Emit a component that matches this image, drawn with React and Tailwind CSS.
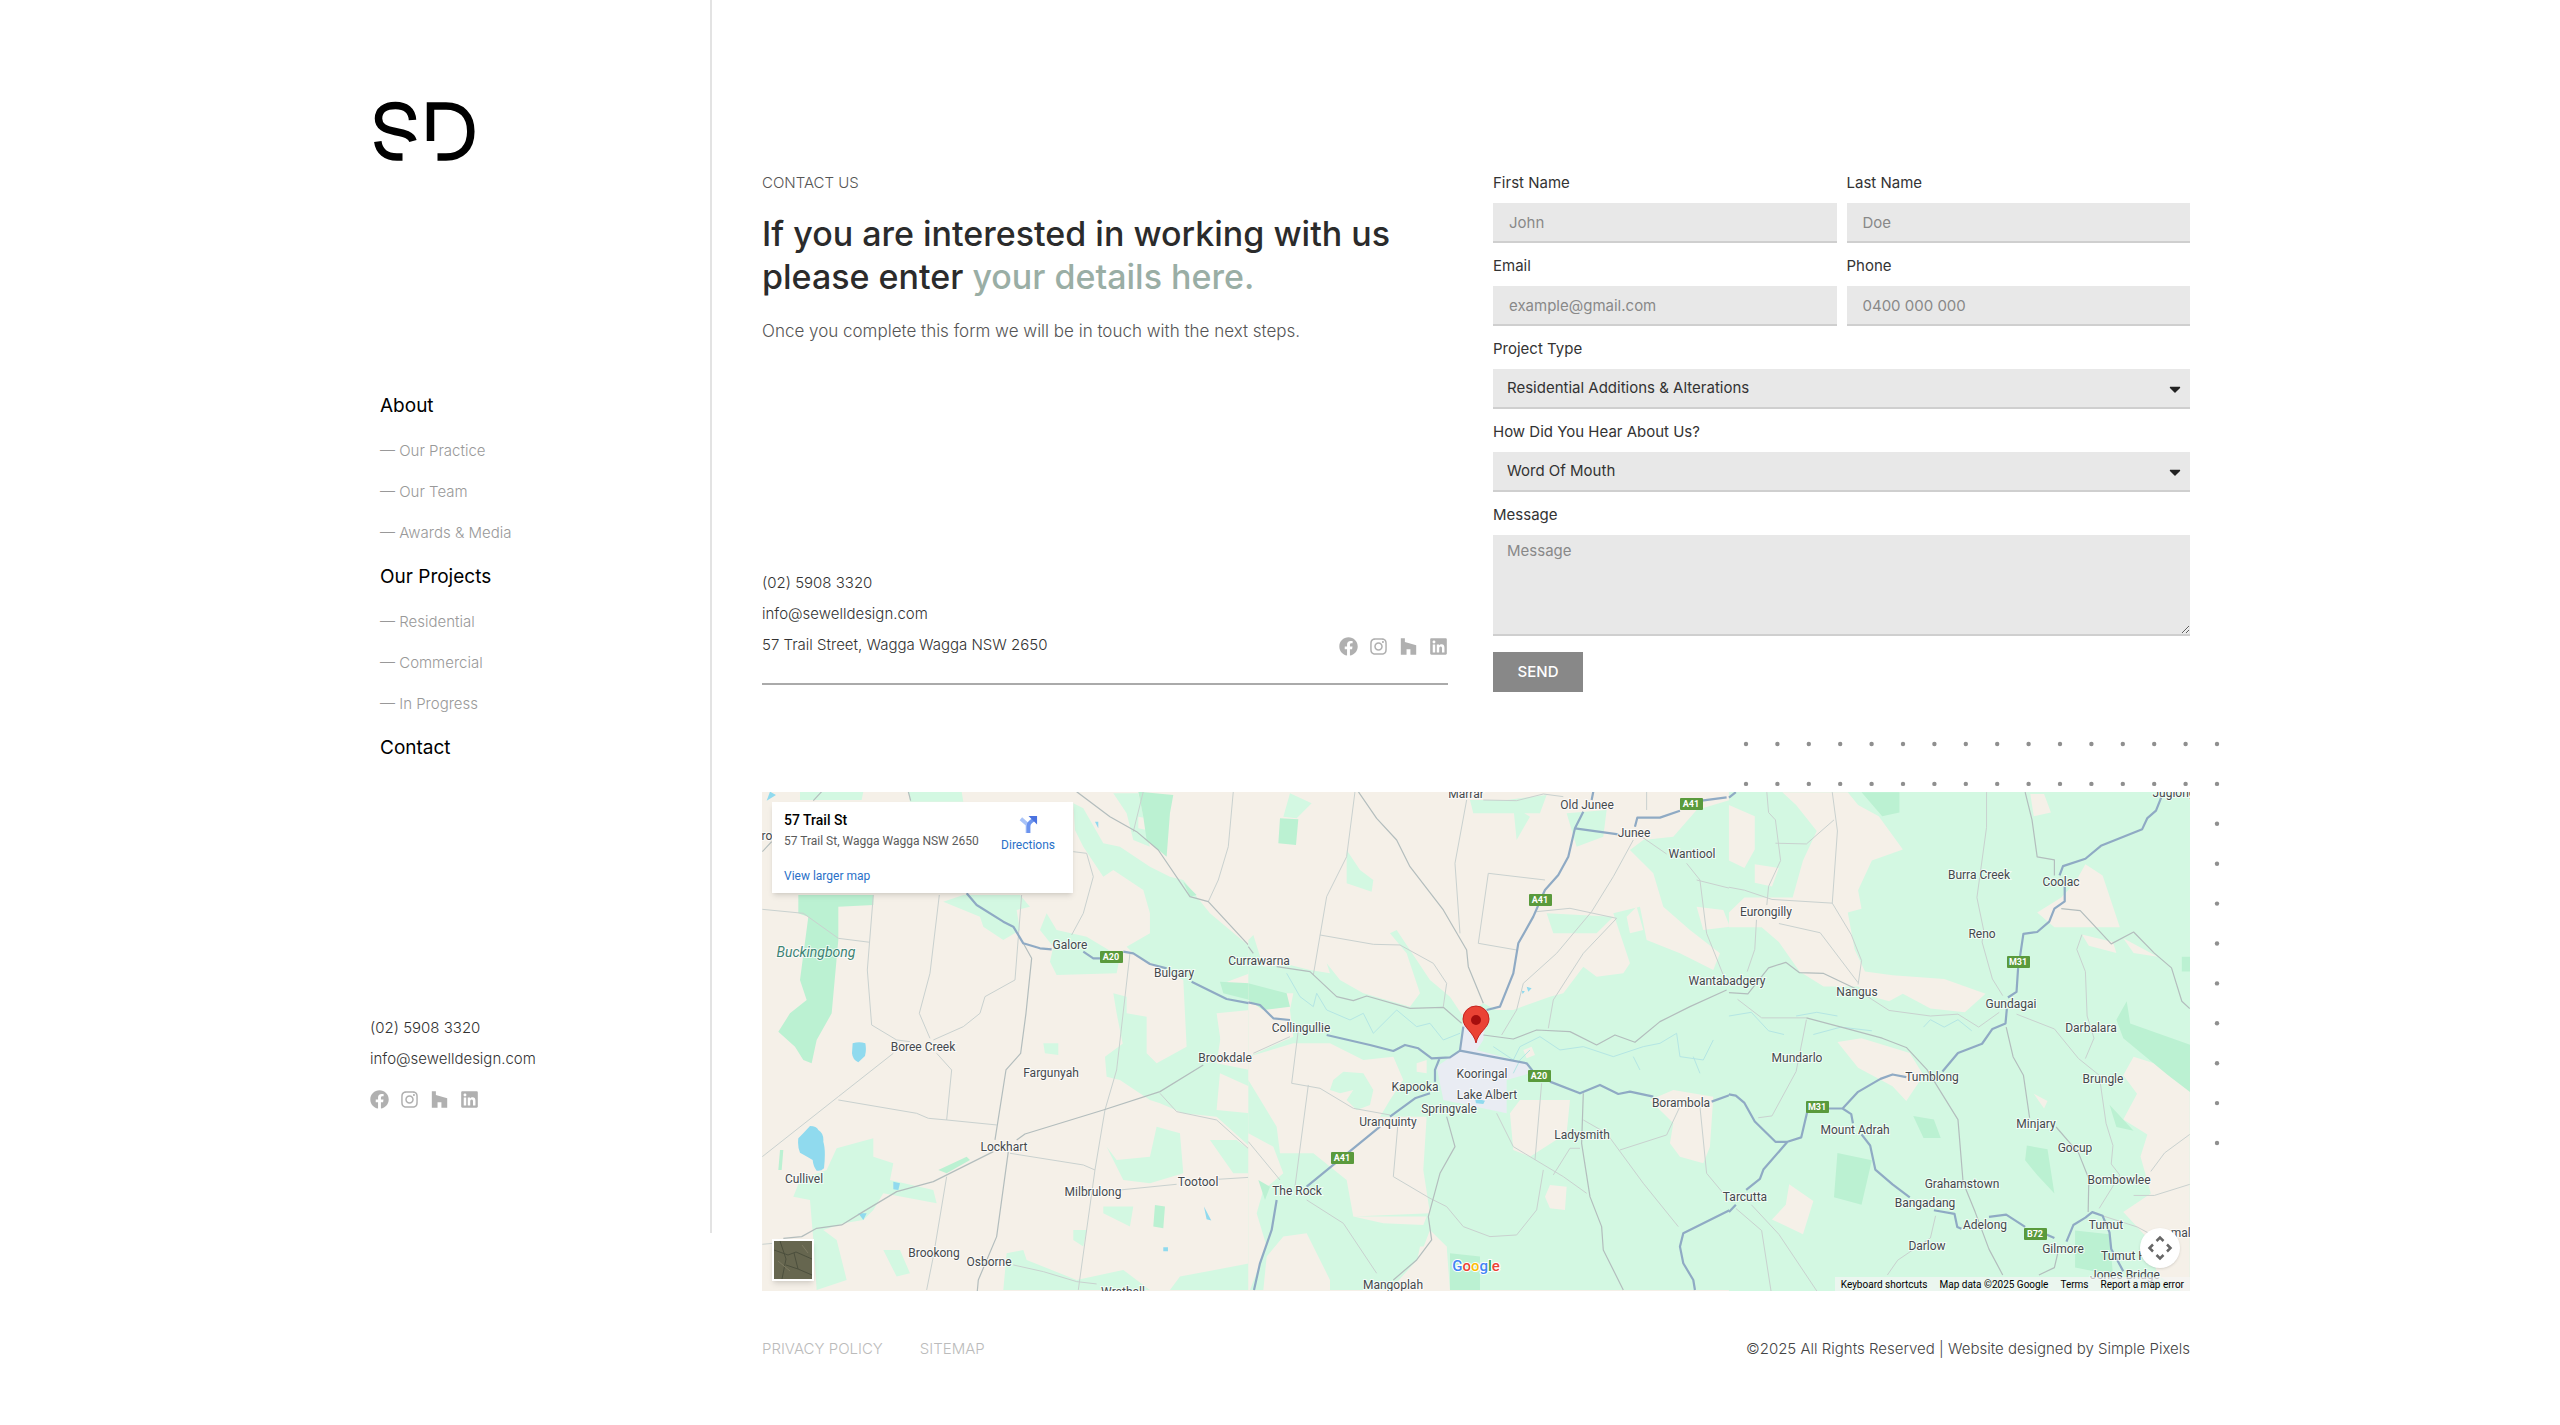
import { FaCaretDown, FaFacebook, FaHouzz, FaInstagram, FaLinkedin } from 'react-icons/fa';

const navGroups = [
  { title: 'About', items: ['Our Practice', 'Our Team', 'Awards & Media'] },
  { title: 'Our Projects', items: ['Residential', 'Commercial', 'In Progress'] },
  { title: 'Contact', items: [] },
];

const socials = [
  { label: 'Facebook', Icon: FaFacebook },
  { label: 'Instagram', Icon: FaInstagram },
  { label: 'Houzz', Icon: FaHouzz },
  { label: 'LinkedIn', Icon: FaLinkedin },
];

// The terrain is drawn as three overlapping tiles, west to east
const tiles = [
  {
    id: 'west',
    transform: 'translate(-12 -12) scale(0.3333)',
    base: 'M0 0H1500V1560H0Z',
    baseFill: '#f5f0e8',
    green:
      'M150 35H340L335 60H150Z M475 35H635L640 65H480Z M970 70L1000 85 1060 190 1110 200 1200 260 1260 290 1300 300 1380 400 1500 500V580L1420 610 1500 650V700L1420 720 1400 850 1500 870V1100L1400 1010 1300 1000 1230 970 1200 960 1110 900 1070 890 1065 830 1120 790 1190 820 1220 850 1310 800 1300 600 1150 520 1130 500 1200 460V400L1180 330 1090 270 1060 290 1000 200 975 150Z M580 365L640 345H810L840 380 800 390 810 450 760 480 700 440 690 410Z M890 400L920 450 1010 470 1110 530 1100 580 920 585 900 545 910 500 870 450Z M1090 640L1130 650V700L1190 710V830L1120 800 1100 700Z M1090 40H1165L1200 200 1150 180 1130 100Z M260 1105L370 1075V1130L430 1150 420 1200 550 1230 560 1270 480 1255 400 1240 370 1290 340 1320 280 1330 220 1350 260 1380 290 1500 200 1530 190 1380 180 1260 130 1250 150 1200 230 1170Z M400 1410H450L480 1480 440 1490Z M770 1420L820 1410 830 1440 980 1500 1120 1470 1200 1530H760Z M1290 1490L1500 1450V1530H1260Z M1070 1100L1100 1140 1200 1130 1220 1040 1290 1060 1300 1180 1200 1210 1120 1200Z M1380 1080H1460L1500 1110V1180H1450Z M1060 1280H1150L1140 1340 1060 1300Z M880 790H925V825L885 820Z M970 1350H1010L1000 1400 970 1380Z',
    beige: 'M1400 700L1500 690V830L1420 840Z M1410 880L1500 920V1000L1400 990Z M1165 110L1190 115V150L1165 145Z',
    forest:
      'M145 345H370V375L265 380V480L245 700 200 780 185 850 160 840 135 800 85 755 120 700 170 660 150 600 175 410 145 400Z M1165 35L1180 110 1190 180 1250 230 1260 100 1270 45Z M90 1110H100L95 1170H85Z M565 1170L650 1130 660 1140 590 1180Z M1215 1275L1245 1280 1240 1345 1210 1340Z M1410 605L1500 610V660L1420 640Z M1300 305L1340 345 1320 350Z',
    water:
      'M308 790Q328 784 346 790Q350 810 345 828L325 847Q308 840 306 820Z M180 1038Q200 1038 205 1050Q222 1060 220 1085Q228 1110 222 1165Q212 1175 200 1172Q190 1160 188 1140Q172 1130 150 1118Q142 1100 145 1075Q160 1060 180 1038Z M430 1205L450 1210 445 1230 430 1228Z M325 1300H350L340 1320Z M1362 1280L1384 1322 1370 1318Z M60 35L78 45 50 62Z M1240 1402H1254V1414H1240Z M1035 125H1045V145Z',
    minor:
      'M37 1130L265 950 430 820 M265 960L500 1000 535 1015 590 1020 740 1035 M370 345L352 570 365 735 440 780 480 785 M568 345L540 580 508 700 540 775 M815 345L795 600 705 650 690 700 640 740 550 780 M560 820L605 870 590 1020 M1140 520L1100 870 1065 990 1035 1170 985 1530 M780 1120L1000 1155 1035 1170 M37 388L160 400 265 475 360 487 M590 1190L550 1430 530 1530 M1110 1230L1280 1213 M1405 1198L1500 1192 M790 1455L880 1475 980 1505 1040 1512 M970 215L1010 220 1030 290 1000 400 965 465 M1450 35L1435 200 1405 300 1375 365 M1180 35L1150 155 M1230 940L1280 995 1400 1020 1500 1110 M37 1393L70 1390',
    major:
      'M980 35L1080 110 1160 155 1225 210 1320 350 1375 365 1500 500 M820 490L845 535 828 700 812 820 768 870 735 1080 M100 1375L155 1370 200 1345 275 1335 340 1295 440 1235 550 1205 730 1115 M800 1080L825 1062 1060 990 1230 935 1360 855 M775 1115L740 1370 685 1500 682 1533 M215 35L190 62 M475 35L482 62 M37 215L65 185',
    highway:
      'M650 340L680 375 760 425 790 440 820 490 870 505 905 508 M1000 515L1030 535H1060 M1120 515L1150 520 1200 552 1250 565 M1325 605L1430 657 1500 670',
  },
  {
    id: 'central',
    transform: 'translate(468 -12) scale(0.3333)',
    base: 'M55 0H1500V1560H55Z',
    baseFill: '#f5f0e8',
    green:
      'M55 480L70 465 100 560 180 555 240 570 300 580 290 550 330 600 400 640 540 680 570 640 530 520 480 460 500 450 560 540 600 600 660 650 700 710 760 670 800 690 850 690 960 650 1000 640 1060 560 1100 590 1180 580 1200 550 1170 460 1150 400 1230 380 1250 480 1350 520 1450 570 1470 520 1380 450 1300 380 1270 280 1200 210 1240 180 1330 170 1400 90 1500 60V1530H660L650 1400 600 1350 570 1430 480 1530H55V690L180 690 190 640 100 640 55 620Z M180 40L245 70 200 115 160 110Z M350 210L390 270 430 300 425 335 350 310Z M720 60H830L950 45 930 100H730Z M850 80L900 110 860 180Z M950 400L1150 410 1100 460 970 460Z M1010 100L1130 90 1120 170 1040 200Z',
    beige:
      'M55 830L190 790H300L400 840 490 830 520 900 480 960 450 1010H590L580 1170 600 1300 370 1310 350 1200 250 1120H150L140 1040 55 900Z M870 960H1020L1010 1060 900 1130 850 1110 840 1000Z M960 1215L1010 1220 1005 1290 960 1285 945 1250Z M1260 960L1330 930 1450 950 1440 1100 1420 1150 1350 1130 1320 1090 1330 1030Z M55 690H180L190 770 55 830Z M55 1060L130 1100 160 1180 100 1230 80 1300 110 1400 60 1530H55Z M110 1430L160 1370 230 1360 300 1500V1530H100Z M570 1400H650V1500L600 1520 560 1450Z M370 1310H590L580 1335 460 1330Z M1190 410L1220 380 1240 450 1200 460Z M1400 380L1480 390 1500 440 1420 450Z M560 850L590 840V880L560 875Z M880 810L905 800 915 825 890 835Z',
    greenPatch: 'M310 900L340 875 400 880 430 930 420 975 380 990 350 960 370 930 330 940 300 930Z',
    forest: 'M150 115L205 118 198 195 145 190Z M55 610L170 640 180 680 100 690 55 660Z M660 1420L750 1430V1530H660Z M85 1200L120 1220 105 1260Z',
    water: 'M735 955L765 962 760 972 738 970Z M890 620L905 625 895 635Z M875 632L885 634 878 642Z',
    urban: 'M700 720L770 700 760 780 740 810 890 850 900 880 830 900V1000L640 960 620 860 690 810Z',
    minor:
      'M375 35L350 230 290 350 250 585 M270 465L430 493 510 495 610 550 650 610 640 680 M710 60L675 250 690 460 M945 300L775 280 745 490 860 510 M920 395L1020 385 1160 415 1060 520 970 660 955 745 M1210 180L1150 290 1085 395 980 520 880 610 860 690 815 765 M1220 160L1310 222 M1370 250L1410 300 1430 460 1490 610 M1400 300L1500 325 M205 750L185 910 270 925 370 985 480 1005 M235 915L195 1220 M55 1085L150 1200 M230 1260L340 1330 440 1480 M505 1020L490 1190 600 1255 650 1280 700 1340 780 1370 860 1365 920 1290 940 1170 M800 1000L850 1100 1000 1190 1070 1240 M935 910L915 1140 M1060 1020L1130 1060 1240 1210 1345 1340 M1170 1110L1310 1065 1350 980 M1410 980L1430 1180 1480 1240 M180 770L70 820 M1250 35V90 M760 60L860 62 940 42 1000 50 M970 1185L1020 1105H1050',
    major:
      'M385 35L440 115 500 180 540 260 640 390 710 510 715 560 760 670 M55 500L70 520 M140 560L240 575 320 650 370 662 410 648 540 685 640 682 695 730 M760 765L850 777 920 750 1020 755 1100 795 1155 765 1215 787 1290 725 1380 680 1490 630 M1060 940L1055 1090 1080 1250 1115 1340 1120 1410 1180 1530 M650 1010L675 1100 630 1180 595 1310 605 1380 560 1440 490 1500',
    river:
      'M170 580L210 650 250 680 260 640 290 690 360 720 400 700 430 760 500 690 560 740 600 730 640 780 690 760 M790 800L850 840 870 800 930 770 990 810 1060 800 1150 830 1240 800 1290 790 1340 760 1350 830 1420 840 1450 780 M1210 830L1230 870 M1390 830L1410 880 M850 880L870 840 900 810',
    highway:
      'M55 667L90 675 130 715 180 720 M290 765L420 795 490 813 525 795 565 805 605 835 660 832 690 812 890 850 910 875 M960 905L1050 940 1110 915 1165 942 1200 935 1270 950 M1445 965L1500 945 M690 812L700 740 M630 832L615 870V905 M600 940L555 955 480 1010 M450 1040L230 1220 M140 1260L125 1350 90 1450 72 1530 M1090 35L1085 60 M1060 95L1035 145 1015 230 985 285 945 330 910 410 865 490 850 580 810 680 770 690 M1035 145L1165 163 M1215 140L1222 113H1290L1350 92 M1415 62L1490 52 M1500 1290L1360 1360 1350 1400 1360 1450 1390 1500 1395 1530',
  },
  {
    id: 'east',
    transform: 'translate(948 -72) scale(0.3444 0.37)',
    base: 'M55 0H1400V1568H55Z',
    baseFill: '#d3f8e2',
    green: '',
    beige:
      'M210 195H400L430 230 490 260 560 350 470 380 430 460 440 510 400 520 420 620 450 680 530 690 680 700 800 740 740 790 640 780 560 740 520 760 480 750 430 720 330 720 260 680 200 600 150 560H55V520L100 480H240L270 380 310 300 250 230Z M55 230L130 260V350L100 400 55 380Z M930 200H970L990 250 940 260Z M1090 390L1140 420 1190 560H1000L950 520 1020 480 1060 440Z M1080 580L1170 600 1180 630 1100 610Z M1200 590L1300 640 1230 630Z M370 870L440 860 580 900 620 960 570 1030 530 990 430 940Z M1230 910L1330 940 1393 1000V1560L1300 1500 1270 1400 1200 1330 1280 1280 1250 1180 1270 1120 1200 1080 1240 1010 1200 960Z M940 1010L980 1030 970 1050Z M230 1255L300 1300 270 1390 180 1350 220 1310Z M130 390L200 400 180 450 130 440Z',
    forest:
      'M440 195H550V250L500 260Z M1210 760L1220 820 1400 880V1010L1330 960 1200 860 1180 810Z M370 1170L470 1190 440 1310 360 1290Z M590 1070L650 1080 670 1130 620 1130Z M920 1150L980 1160 1000 1280 950 1230 915 1190Z M1060 1380L1160 1390 1170 1500 1060 1480Z M1160 1040L1230 1110 1180 1100Z M1370 640H1400V680H1370Z',
    water: '',
    river: 'M55 800L120 790 170 840 215 850 M250 800L310 790 370 800 M620 830L640 810 680 830 720 810 760 840 M300 850L380 830 470 840',
    minor:
      'M803 195V290L775 480 795 570 790 600 820 700 850 745 M165 195L170 250 190 270 205 380 170 450 165 500 M355 195L370 300 355 495 410 580 440 650 430 715 M190 333L280 335 360 270 M55 452L100 460 180 485 355 495 M200 550L320 575 430 710 M135 540L130 620 108 680 M80 755L150 805H280 M280 810L250 950 180 1070 140 1075 M1080 580L1065 620 1090 680 1095 800 1115 860 1090 915 M1393 1120L1320 1170 1280 1220 M1230 1285H1290L1393 1255 M655 1340L640 1400 545 1460 515 1500 M75 1320L150 1380 180 1560 M120 1310L200 1390 310 1543 M890 795L1000 835 1070 915 1130 960 1150 1090 1170 1150 1165 1200 1190 1230 1130 1320 M1140 1340L1240 1370 1300 1400 M420 725L520 785 640 800 720 795 780 830 840 790',
    major:
      'M915 195L935 270 950 370 1000 378V420 M55 737L110 740 170 670 220 655 260 683 330 685 420 725 M280 805L400 835 500 860 570 885 630 945 720 1080 735 1250 770 1330 810 1430 850 1500 M860 830L880 910 910 960 928 1075 M1020 510L1075 515 1130 570 1165 605 1230 573 1290 630 1340 670 1370 760 1393 780 M1005 1100L1070 1170 1100 1240 1098 1330 M1010 1440L1000 1480 955 1500',
    highway:
      'M55 210L75 195 M1310 210L1295 245 1270 265 1255 295 1135 340 1090 375 1025 395 1015 420 M1030 450V490L1000 510 985 545 950 573 910 578 900 640 M895 665L890 735 865 750 M862 780L858 820 820 835 790 875 720 900 675 950 M570 965L530 958 495 970 430 1005 385 1050H345 M385 1050L410 1065 415 1090 M440 1120L465 1150 480 1215 530 1255 580 1290 M650 1325L710 1335 718 1370 730 1375 M810 1343L860 1337 915 1370 M975 1390L1000 1400 M1035 1410L1055 1365 1090 1345 1110 1330 1140 1340 1160 1385 1165 1430 1200 1490 M55 1012L75 1015 100 1035 130 1085 190 1140H225L265 1128 282 1060 M225 1140L155 1215 145 1240 105 1270 M75 1310L55 1330',
  },
];

const towns = [
  ['Marrar', 704, 2], ['Old Junee', 825, 13], ['Junee', 872, 41], ['Wantiool', 930, 62],
  ['Burra Creek', 1217, 83], ['Coolac', 1299, 90], ['Eurongilly', 1004, 120], ['Reno', 1220, 142],
  ['Galore', 308, 153], ['Bulgary', 412, 181], ['Currawarna', 497, 169], ['Wantabadgery', 965, 189],
  ['Nangus', 1095, 200], ['Gundagai', 1249, 212], ['Darbalara', 1329, 236], ['Collingullie', 539, 236],
  ['Boree Creek', 161, 255], ['Brookdale', 463, 266], ['Fargunyah', 289, 281], ['Mundarlo', 1035, 266],
  ['Tumblong', 1170, 285], ['Brungle', 1341, 287], ['Kooringal', 720, 282], ['Kapooka', 653, 295],
  ['Lake Albert', 725, 303], ['Springvale', 687, 317], ['Uranquinty', 626, 330], ['Borambola', 919, 311],
  ['Ladysmith', 820, 343], ['Mount Adrah', 1093, 338], ['Minjary', 1274, 332], ['Gocup', 1313, 356],
  ['Bombowlee', 1357, 388], ['Grahamstown', 1200, 392], ['Bangadang', 1163, 411], ['Tarcutta', 983, 405],
  ['Adelong', 1223, 433], ['Darlow', 1165, 454], ['Gilmore', 1301, 457], ['Tumut', 1344, 433],
  ['Jones Bridge', 1363, 483], ['Lockhart', 242, 355], ['Cullivel', 42, 387], ['Milbrulong', 331, 400],
  ['Tootool', 436, 390], ['The Rock', 535, 399], ['Mangoplah', 631, 493], ['Brookong', 172, 461],
  ['Osborne', 227, 470], ['Wrathall', 361, 500], ['ro', 5, 44], ['Tumut H', 1362, 464], ['Jugiong', 1412, 1],
  ['mala', 1422, 441],
];

const shields = [
  ['A41', 929, 12], ['A41', 778, 108], ['A20', 349, 165], ['M31', 1256, 170],
  ['A20', 777, 284], ['M31', 1055, 315], ['A41', 580, 366], ['B72', 1273, 442],
];

const labelClass = 'mb-[8px] block text-[15px] leading-6 text-[#333]';
const fieldClass =
  'block h-10 w-full rounded-none border-0 border-b-2 border-[#cfcfcf] bg-[#e8e8e8] text-[15px] text-[#333] outline-none placeholder:text-[#888]';

function Logo() {
  return (
    <svg className="h-[60px] w-[102px]" viewBox="0 0 102 60" fill="none" stroke="#000" strokeWidth="7.500" aria-label="SD">
      <path d="M38.500 19C38 9.500 31.500 4.500 21.500 4.500C11 4.500 4.500 9.500 4.500 17.500C4.500 25.500 11 28.500 21 30.500C31 32.500 37.500 34 39 40" />
      <path d="M3.800 40.500C5 50 12 56 23 56H28.500" />
      <path d="M56.500 40V5H72C87.500 5 96.800 14.500 96.800 30.500C96.800 46.500 87.500 56 72 56H63.500" />
    </svg>
  );
}

function Socials({ className = '' }) {
  return (
    <div className={`flex gap-[11px] text-[19px] text-[#b0b0b0] ${className}`}>
      {socials.map(({ label, Icon }) => (
        <a key={label} href="#" aria-label={label}>
          <Icon />
        </a>
      ))}
    </div>
  );
}

function Sidebar() {
  return (
    <aside className="flex h-[1233px] w-[342px] shrink-0 flex-col border-r-2 border-[#e3e3e3] pt-[101px]">
      <a href="#" className="ml-1">
        <Logo />
      </a>
      <nav className="mt-[225px] ml-[10px]">
        {navGroups.map((group) => (
          <div key={group.title} className="mb-1">
            <a href="#" className="block text-[19px] leading-10 text-black">{group.title}</a>
            <ul className="mt-1">
              {group.items.map((item) => (
                <li key={item} className="text-[15px] font-light leading-[41px] text-[#999]">
                  <a href="#">— {item}</a>
                </li>
              ))}
            </ul>
          </div>
        ))}
      </nav>
      <div className="mt-auto mb-[124px] text-[15px] leading-[31px] font-light text-[#333]">
        <a href="#" className="block">(02) 5908 3320</a>
        <a href="#" className="block">info@sewelldesign.com</a>
        <Socials className="mt-4" />
      </div>
    </aside>
  );
}

function Intro() {
  return (
    <section className="flex w-[686px] flex-col border-b-2 border-[#aaa]">
      <p className="text-[15px] leading-6 font-light text-[#555]">CONTACT US</p>
      <h1 className="mt-[17px] text-[34px] leading-[43px] font-medium text-[#2b2b2b]">
        If you are interested in working with us
        <br />
        please enter <span className="text-[#9aaea5]">your details here.</span>
      </h1>
      <p className="mt-[21px] text-[17px] leading-6 font-light text-[#555]">
        Once you complete this form we will be in touch with the next steps.
      </p>
      <div className="mt-auto mb-[23px] flex items-end justify-between text-[15px] leading-[31px] font-light text-[#333]">
        <address className="not-italic">
          <a href="#" className="block">(02) 5908 3320</a>
          <a href="#" className="block">info@sewelldesign.com</a>
          <p>57 Trail Street, Wagga Wagga NSW 2650</p>
        </address>
        <Socials className="mb-1" />
      </div>
    </section>
  );
}

function Field({ id, label, ...props }) {
  return (
    <div>
      <label htmlFor={id} className={labelClass}>{label}</label>
      <input id={id} className={`${fieldClass} px-4`} {...props} />
    </div>
  );
}

function SelectField({ id, label, options }) {
  return (
    <div className="col-span-2">
      <label htmlFor={id} className={labelClass}>{label}</label>
      <div className="relative">
        <select id={id} className={`${fieldClass} appearance-none px-[14px]`}>
          {options.map((option) => (
            <option key={option}>{option}</option>
          ))}
        </select>
        <FaCaretDown className="pointer-events-none absolute top-[11px] right-[6px] text-[18px] text-[#222]" />
      </div>
    </div>
  );
}

function ContactForm() {
  return (
    <form className="w-[697px]">
      <div className="grid grid-cols-2 gap-x-[10px] gap-y-[11px]">
        <Field id="first" label="First Name" placeholder="John" />
        <Field id="last" label="Last Name" placeholder="Doe" />
        <Field id="email" type="email" label="Email" placeholder="example@gmail.com" />
        <Field id="phone" type="tel" label="Phone" placeholder="0400 000 000" />
        <SelectField id="type" label="Project Type" options={['Residential Additions & Alterations', 'Commercial']} />
        <SelectField id="source" label="How Did You Hear About Us?" options={['Word Of Mouth', 'Google']} />
        <div className="col-span-2">
          <label htmlFor="message" className={labelClass}>Message</label>
          <textarea
            id="message"
            placeholder="Message"
            className="block h-[101px] w-full resize-y border-b-2 border-[#cfcfcf] bg-[#e8e8e8] px-[14px] py-1 text-[15px] leading-6 text-[#333] outline-none placeholder:text-[#888]"
          />
        </div>
      </div>
      <button type="button" className="mt-4 h-10 w-[90px] bg-[#888] text-[15px] font-medium text-white">SEND</button>
    </form>
  );
}

function Dots() {
  const rows = Array.from({ length: 11 }, (_, i) => i);
  const cols = Array.from({ length: 16 }, (_, i) => i);
  return (
    <svg className="absolute -top-[52px] -right-[30px] h-[410px] w-[478px]" viewBox="0 0 478 410" fill="#8f8f8f">
      {rows.map((r) => cols.map((c) => <circle key={`${r}-${c}`} cx={4 + c * 31.4} cy={4 + r * 39.9} r="2.200" />))}
    </svg>
  );
}

function Terrain() {
  return (
    <svg
      className="absolute inset-0 h-full w-full"
      viewBox="0 0 1428 499"
      preserveAspectRatio="xMidYMid slice"
      fontFamily="Roboto, sans-serif"
      fontSize="12"
    >
      {tiles.map((tile) => (
        <g key={tile.id} transform={tile.transform} strokeLinejoin="round">
          <path d={tile.base} fill={tile.baseFill} />
          <path d={tile.green} fill="#d3f8e2" />
          <path d={tile.beige} fill="#f5f0e8" />
          <path d={tile.greenPatch} fill="#d3f8e2" />
          <path d={tile.forest} fill="#bbf1d2" />
          <path d={tile.urban} fill="#e9ecf3" />
          <path d={tile.water} fill="#90daee" />
          <g fill="none">
            <path d={tile.river} stroke="#b4e6e4" strokeWidth="1" vectorEffect="non-scaling-stroke" />
            <path d={tile.minor} stroke="#c9d1cf" strokeWidth="1" vectorEffect="non-scaling-stroke" />
            <path d={tile.major} stroke="#b3bdbd" strokeWidth="1.200" vectorEffect="non-scaling-stroke" />
            <path d={tile.highway} stroke="#8faac4" strokeWidth="2.200" vectorEffect="non-scaling-stroke" />
          </g>
        </g>
      ))}
      <g textAnchor="middle" fill="#45494d" stroke="#fff" strokeWidth="2" strokeOpacity="0.7" paintOrder="stroke">
        {towns.map(([name, x, y]) => (
          <text key={name} x={x} y={y + 4}>{name}</text>
        ))}
        <text x="54" y="165" fontSize="14" fontStyle="italic" fill="#3e8374">Buckingbong</text>
      </g>
      {shields.map(([name, x, y]) => (
        <g key={`${name}-${x}`}>
          <rect x={x - 11} y={y - 6} width="23" height="12" rx="1" fill="#5a9a3c" />
          <text x={x} y={y + 3} textAnchor="middle" fontSize="9" fontWeight="700" fill="#fff">{name}</text>
        </g>
      ))}
      <g>
        <path d="M714 251C712 240 701 236 701 227A13 13 0 0 1 727 227C727 236 716 240 714 251Z" fill="#ea4335" stroke="#c5221f" />
        <circle cx="714" cy="228" r="5" fill="#a50e0e" />
      </g>
      <text x="714" y="479" textAnchor="middle" fontSize="15" fontWeight="500" stroke="#fff" strokeWidth="2" paintOrder="stroke">
        <tspan fill="#4285f4">G</tspan>
        <tspan fill="#ea4335">o</tspan>
        <tspan fill="#fbbc04">o</tspan>
        <tspan fill="#4285f4">g</tspan>
        <tspan fill="#34a853">l</tspan>
        <tspan fill="#ea4335">e</tspan>
      </text>
    </svg>
  );
}

function MapCard() {
  return (
    <div className="absolute top-[10px] left-[10px] flex h-[91px] w-[301px] justify-between bg-white pt-[10px] pr-[18px] pl-[12px] font-[Roboto,sans-serif] text-[12px] shadow-md">
      <div>
        <p className="text-[14px] leading-4 font-medium text-black">57 Trail St</p>
        <p className="mt-[5px] leading-4 text-[#5b5b5b]">57 Trail St, Wagga Wagga NSW 2650</p>
        <a href="#" className="mt-[19px] block leading-4 text-[#2a70c8]">View larger map</a>
      </div>
      <a href="#" className="flex flex-col items-center text-[#2a70c8]">
        <svg className="mt-[3px] h-[19px] w-[19px]" viewBox="0 0 20 20">
          <path d="M2 4L9 10V19" fill="none" stroke="#a9c3f8" strokeWidth="4" />
          <path d="M10 19V12Q10 9 12 7.500L15 5" fill="none" stroke="#6d94ee" strokeWidth="4" />
          <path d="M10 1H19V10Z" fill="#4a72e0" />
        </svg>
        <span className="mt-[3px] leading-4">Directions</span>
      </a>
    </div>
  );
}

function MapPanel() {
  return (
    <div className="relative mt-[100px]">
      <Dots />
      <div className="relative h-[499px] overflow-hidden">
        <Terrain />
        <MapCard />
        <button type="button" aria-label="Satellite" className="absolute bottom-[10px] left-[10px] h-[42px] w-[42px] border-2 border-white bg-[#66664f] shadow-md">
          <svg viewBox="0 0 38 38" fill="none" stroke="#4c4f3d">
            <path d="M0 9L14 14 22 11 38 18M6 0L12 18 8 38M20 12L24 28 38 34M12 24L24 28" />
            <path d="M4 20L16 30M28 4L34 12" stroke="#7d7a62" />
          </svg>
        </button>
        <button type="button" aria-label="Camera controls" className="absolute right-[10px] bottom-[23px] h-10 w-10 rounded-full bg-white shadow">
          <svg viewBox="0 0 40 40" fill="none" stroke="#666" strokeWidth="2.500">
            <path d="M16.500 13L20 9.500 23.500 13M16.500 27L20 30.500 23.500 27M13 16.500L9.500 20 13 23.500M27 16.500L30.500 20 27 23.500" />
          </svg>
        </button>
        <div className="absolute right-0 bottom-0 flex h-[14px] items-center gap-3 bg-[#f5f5f5]/70 px-[6px] font-[Roboto,sans-serif] text-[10px] text-black">
          <button type="button">Keyboard shortcuts</button>
          <span>Map data ©2025 Google</span>
          <a href="#">Terms</a>
          <a href="#">Report a map error</a>
        </div>
      </div>
    </div>
  );
}

export default function App() {
  return (
    <div className="min-h-screen bg-white font-[Inter,sans-serif]">
      <div className="mx-auto flex max-w-[1820px]">
        <Sidebar />
        <main className="min-w-0 flex-1 pt-[171px] pl-[50px]">
          <div className="flex justify-between">
            <div className="flex pb-[7px]">
              <Intro />
            </div>
            <ContactForm />
          </div>
          <MapPanel />
          <footer className="mt-[46px] flex justify-between text-[15px] leading-6 font-light text-[#444]">
            <div className="flex gap-[37px] text-[#bbb]">
              <a href="#">PRIVACY POLICY</a>
              <a href="#">SITEMAP</a>
            </div>
            <p>©2025 All Rights Reserved | Website designed by Simple Pixels</p>
          </footer>
        </main>
      </div>
    </div>
  );
}
